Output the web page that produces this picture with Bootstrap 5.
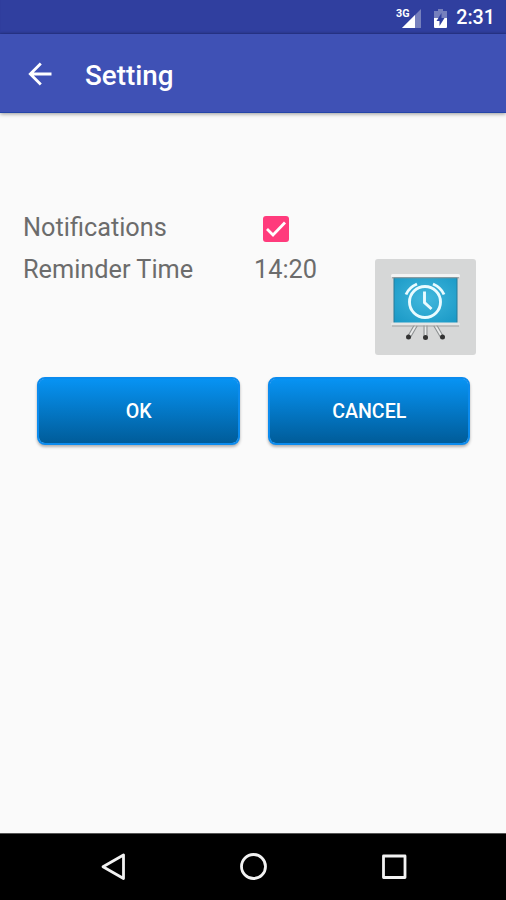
<!DOCTYPE html>
<html lang="en">
<head>
<meta charset="utf-8">
<meta name="viewport" content="width=device-width, initial-scale=1">
<title>Setting</title>
<link href="https://cdn.jsdelivr.net/npm/bootstrap@5.3.0/dist/css/bootstrap.min.css" rel="stylesheet">
<style>
body { font-family: Roboto, "Liberation Sans", sans-serif; background: #fafafa; color: #6c6c6c; }
svg { display: block; flex: none; }
.status-bar { height: 34px; background: #303f9f; padding-right: 11px; box-shadow: inset 0 -2px 2px -1px #28368b; }
.clock { font-size: 19.7px; font-weight: 500; line-height: 34px; margin: 2px 0 0 8px; }
.app-bar { height: 79px; background: #3f51b5; padding: 0 0 0 26px; border-bottom: 1px solid #2445a8; box-shadow: 0 1px 4px rgba(0,0,0,.4); }
.app-title { font-size: 27.8px; font-weight: 500; line-height: 32px; margin: 5px 0 0 31px; }
.back-btn { width: 28px; margin-top: 1px; }
.settings { padding: 94px 30px 0 23px; font-size: 25.3px; line-height: 32px; }
.name-col { width: 231px; }
.row-check { height: 47px; padding-top: 5px; }
.row-time { height: 101px; }
.check-wrap { padding: 4px 0 0 9px; }
.thumb { width: 101px; height: 96px; margin-top: 5px; background: #d6d7d7; border-radius: 3px; }
.actions { padding: 22px 36px 0 37px; gap: 28px; }
.btn-glossy { height: 68px; font-size: 19.6px; font-weight: 500; color: #fff; border: 2px solid #0b8bee; border-radius: 8px; background: linear-gradient(#0793f3, #005c99) padding-box #0b8bee; box-shadow: 0 2px 3px rgba(0,0,0,.3); padding: 2px 0 0 1px; line-height: 62px; }
.btn-glossy:hover { color: #fff; }
.nav-keys { height: 67px; background: #000; border-top: 1px solid #555; padding: 0 98px 0 99px; }
</style>
<script defer src="https://cdn.jsdelivr.net/npm/bootstrap@5.3.0/dist/js/bootstrap.bundle.min.js"></script>
</head>
<body class="vh-100 d-flex flex-column overflow-hidden">
<div class="status-bar d-flex align-items-center justify-content-end text-white">
  <svg width="54" height="28" viewBox="0 0 54 28">
    <path d="M27 6V25H8z" fill="#7680bd"/>
    <path d="M21 12V25H8z" fill="#fff"/>
    <text x="2" y="13.500" font-size="11.500" font-weight="700" fill="#fff" stroke="#303f9f" stroke-width="1" paint-order="stroke" textLength="13.500" lengthAdjust="spacingAndGlyphs">3G</text>
    <path d="M40 8h4V6h5v2h4v9H40z" fill="#7680bd"/>
    <path d="M40 15h13v9a1 1 0 0 1-1 1H41a1 1 0 0 1-1-1z" fill="#fff"/>
    <path d="M47.500 10l-5 8h3v5l5-8h-3z" fill="#303f9f"/>
  </svg>
  <span class="clock">2:31</span>
</div>
<header class="app-bar navbar flex-nowrap justify-content-start align-items-center text-white">
  <a class="back-btn text-white" href="#" aria-label="Back">
    <svg width="28" height="28" viewBox="0 0 28 28" fill="none" stroke="currentColor" stroke-width="2.800"><path d="M25.500 14H5M14.800 3.500L4.300 14l10.500 10.500"/></svg>
  </a>
  <h1 class="app-title">Setting</h1>
</header>
<main class="flex-grow-1">
  <div class="settings">
    <div class="row-check d-flex">
      <div class="name-col">Notifications</div>
      <div class="check-wrap">
        <svg width="26" height="26" viewBox="0 0 26 26"><rect width="26" height="26" rx="3" fill="#ff3b7c"/><path d="M4 13l6 6L22 6.500" fill="none" stroke="#fff" stroke-width="2.800"/></svg>
      </div>
    </div>
    <div class="row-time d-flex">
      <div class="name-col">Reminder Time</div>
      <div>14:20</div>
      <div class="thumb ms-auto d-flex">
        <svg width="101" height="96" viewBox="0 0 101 96">
          <defs>
            <radialGradient id="board" cx=".5" cy=".45" r=".75"><stop offset="0" stop-color="#42b8dd"/><stop offset="1" stop-color="#1696c4"/></radialGradient>
          </defs>
          <g stroke="#8f9293" stroke-width="4"><path d="M41 66l-7 12M50.500 66v12M60 66l7 12"/></g>
          <g stroke="#e9eaea" stroke-width="1.800"><path d="M41 66l-7 12M50.500 66v12M60 66l7 12"/></g>
          <g fill="#333"><circle cx="33.500" cy="78" r="2.500"/><circle cx="50.500" cy="78.500" r="2.500"/><circle cx="67.500" cy="78" r="2.500"/></g>
          <rect x="19" y="18" width="63" height="47" fill="url(#board)" stroke="#287b98"/>
          <rect x="16" y="15" width="69" height="3.500" rx="1.500" fill="#f3f3f3"/><path d="M17 18.800h67" stroke="#888" stroke-width=".9"/>
          <rect x="16" y="63.500" width="69" height="3" rx="1.500" fill="#e4e6e6"/><path d="M17 67h67" stroke="#999" stroke-width=".9"/>
          <g fill="none" stroke="#e9fbff" stroke-width="2.900"><circle cx="50" cy="43" r="15.500"/><path d="M49.500 32.500v11l7 6.500M31 35.500q3-7 11-10.500M58 25q8 3.500 11 10.500"/></g>
        </svg>
      </div>
    </div>
  </div>
  <div class="actions d-flex">
    <button type="button" class="btn btn-glossy flex-fill w-50">OK</button>
    <button type="button" class="btn btn-glossy flex-fill w-50">CANCEL</button>
  </div>
</main>
<footer class="nav-keys d-flex align-items-center justify-content-between">
  <svg width="28" height="30" viewBox="0 0 28 30" fill="none" stroke="#f2f2f2" stroke-width="2.800" stroke-linejoin="round"><path d="M24.500 3v23.500L4 14.800z"/></svg>
  <svg width="28" height="30" viewBox="0 0 28 30" fill="none" stroke="#f2f2f2" stroke-width="2.800"><circle cx="13.500" cy="14.500" r="12"/></svg>
  <svg width="28" height="30" viewBox="0 0 28 30" fill="none" stroke="#f2f2f2" stroke-width="2.800" stroke-linejoin="round"><path d="M3.500 4h21.500v21.500H3.500z"/></svg>
</footer>
</body>
</html>
